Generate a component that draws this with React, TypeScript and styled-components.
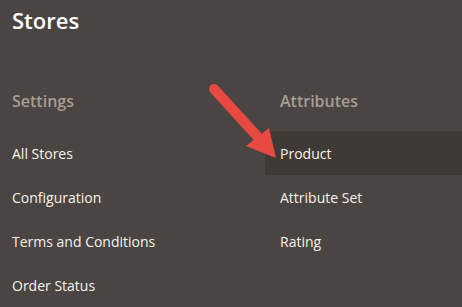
import React from 'react'
import styled, { createGlobalStyle } from 'styled-components'

const GlobalStyle = createGlobalStyle`
  html, body {
    margin: 0;
    padding: 0;
    background: #4a4542;
  }
  body {
    font-family: 'Open Sans', 'Liberation Sans', sans-serif;
  }
`

const Panel = styled.div`
  position: relative;
  width: 462px;
  height: 307px;
  overflow: hidden;
  background: #4a4542;
`

const Title = styled.h1`
  margin: 0;
  padding: 5px 0 0 12px;
  font-size: 22px;
  line-height: 30px;
  font-weight: 600;
  color: #ffffff;
`

const Columns = styled.div`
  display: grid;
  grid-template-columns: 265px 1fr;
  margin-top: 55px;
`

const Column = styled.div<{ inset: number }>`
  display: flex;
  flex-direction: column;
  --inset: ${({ inset }) => inset}px;
`

const Heading = styled.h3`
  margin: 0 0 19px;
  padding-left: var(--inset);
  font-size: 16px;
  line-height: 22px;
  font-weight: 600;
  color: #a79d95;
`

const MenuLink = styled.a<{ active?: boolean }>`
  display: flex;
  align-items: center;
  height: 44px;
  padding-left: var(--inset);
  font-size: 14px;
  font-weight: 400;
  color: #f7f3eb;
  text-decoration: none;
  background: ${({ active }) => (active ? '#403a37' : 'transparent')};
`

const Pointer = styled.svg`
  position: absolute;
  left: 205px;
  top: 80px;
  width: 80px;
  height: 85px;
`

const settings = ['All Stores', 'Configuration', 'Terms and Conditions', 'Order Status']
const attributes = ['Product', 'Attribute Set', 'Rating']

export default function App() {
  return (
    <Panel>
      <GlobalStyle />
      <Title>Stores</Title>
      <Columns>
        <Column inset={12}>
          <Heading>Settings</Heading>
          {settings.map((s) => (
            <MenuLink key={s} href="#">
              {s}
            </MenuLink>
          ))}
        </Column>
        <Column inset={15}>
          <Heading>Attributes</Heading>
          {attributes.map((s) => (
            <MenuLink key={s} href="#" active={s === 'Product'}>
              {s}
            </MenuLink>
          ))}
        </Column>
      </Columns>
      <Pointer viewBox="0 0 80 85">
        <line x1="9" y1="9" x2="52" y2="56" stroke="#e84a41" strokeWidth="10" strokeLinecap="round" />
        <polygon points="71,78 41,66 64,48" fill="#e84a41" />
      </Pointer>
    </Panel>
  )
}
